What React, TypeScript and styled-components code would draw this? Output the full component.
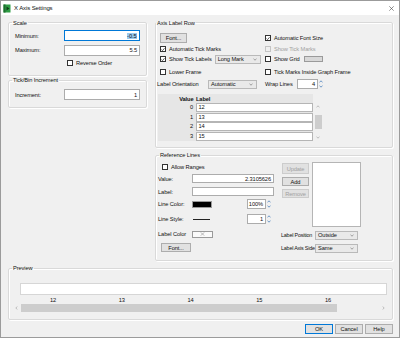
import React from 'react';
import styled, {createGlobalStyle} from 'styled-components';

const GlobalStyle = createGlobalStyle`
  html, body {
    margin: 0;
    padding: 0;
    background: #ffffff;
  }
  body {
    font-family: "Liberation Sans", Arial, sans-serif;
    font-size: 5.7px;
    letter-spacing: -0.1px;
    color: #111;
  }
  * {
    box-sizing: border-box;
  }
`;

const Window = styled.div`
  width: 400px;
  height: 338px;
  border: 1px solid #9b9b9b;
  background: #f0f0f0;
  display: flex;
  flex-direction: column;
  overflow: hidden;
`;

const TitleBar = styled.div`
  height: 14px;
  flex: none;
  background: #fff;
  display: flex;
  align-items: center;
  gap: 3px;
  padding: 0 5px 0 2px;
`;

const Title = styled.span`
  flex: 1;
  font-size: 6px;
`;

const Body = styled.div`
  flex: 1;
  padding: 3.5px 6px 0 7px;
  display: flex;
  flex-direction: column;
`;

const Top = styled.div`
  display: grid;
  grid-template-columns: 139px 238px;
  column-gap: 8px;
`;

const Column = styled.div<{$gap: number}>`
  display: flex;
  flex-direction: column;
  gap: ${p => p.$gap}px;
`;

const Group = styled.fieldset<{$h: number}>`
  margin: 0;
  padding: 0 4px;
  min-width: 0;
  height: ${p => p.$h}px;
  border: 1px solid #d9d9d9;
  border-radius: 2px;
  box-shadow: inset 1px 1px 0 #fff, 1px 1px 0 #fff;
`;

const Legend = styled.legend<{$shift?: number}>`
  padding: 0 1px;
  margin-left: ${p => p.$shift ?? -1}px;
  line-height: 8px;
`;

const FormRow = styled.div<{$h?: number; $mt?: number; $ml?: number}>`
  display: flex;
  align-items: center;
  height: ${p => p.$h ?? 11}px;
  margin-top: ${p => p.$mt ?? 0}px;
  margin-left: ${p => p.$ml ?? 0}px;
`;

const Label = styled.span<{$w?: number; $muted?: boolean; $tight?: boolean}>`
  flex: none;
  width: ${p => (p.$w ? `${p.$w}px` : 'auto')};
  color: ${p => (p.$muted ? '#a2a2a2' : 'inherit')};
  font-size: ${p => (p.$tight ? '5.4px' : 'inherit')};
  letter-spacing: ${p => (p.$tight ? '-0.2px' : 'inherit')};
  white-space: nowrap;
`;

const TextBox = styled.div<{$w: number; $h?: number; $focus?: boolean}>`
  flex: none;
  width: ${p => p.$w}px;
  height: ${p => p.$h ?? 11}px;
  background: #fff;
  border: 1px solid ${p => (p.$focus ? '#0078d7' : '#acacac')};
  display: flex;
  align-items: center;
  justify-content: flex-end;
  padding: 0 2px;
`;

const Selected = styled.span`
  background: #99c9ef;
  padding: 0 0.5px;
`;

const BoxMark = styled.span<{$disabled?: boolean}>`
  flex: none;
  width: 6px;
  height: 6px;
  border: 1px solid ${p => (p.$disabled ? '#c4c4c4' : '#333')};
  background: ${p => (p.$disabled ? '#f0f0f0' : '#fff')};
  display: flex;
  align-items: center;
  justify-content: center;
`;

const CheckLine = styled.div<{$mt?: number; $ml?: number}>`
  display: flex;
  align-items: center;
  gap: 3px;
  margin-top: ${p => p.$mt ?? 0}px;
  margin-left: ${p => p.$ml ?? 0}px;
`;

const Button = styled.div<{$w: number; $h?: number; $default?: boolean; $disabled?: boolean; $ml?: number}>`
  flex: none;
  width: ${p => p.$w}px;
  height: ${p => p.$h ?? 9}px;
  margin-left: ${p => p.$ml ?? 0}px;
  background: #e1e1e1;
  border: 1px solid ${p => (p.$default ? '#0078d7' : p.$disabled ? '#cccccc' : '#adadad')};
  color: ${p => (p.$disabled ? '#a0a0a0' : 'inherit')};
  display: flex;
  align-items: center;
  justify-content: center;
`;

const DropDown = styled.div<{$w: number; $ml?: number}>`
  flex: none;
  width: ${p => p.$w}px;
  height: 9px;
  margin-left: ${p => p.$ml ?? 0}px;
  background: #e9e9e9;
  border: 1px solid #b9b9b9;
  display: flex;
  align-items: center;
  justify-content: space-between;
  padding: 0 3px 0 2px;
`;

const Swatch = styled.div<{$w: number; $h: number; $color: string; $ml?: number}>`
  flex: none;
  width: ${p => p.$w}px;
  height: ${p => p.$h}px;
  margin-left: ${p => p.$ml ?? 0}px;
  background: ${p => p.$color};
  border: 1px solid #9a9a9a;
  display: flex;
  align-items: center;
  justify-content: center;
`;

const StyleLine = styled.span`
  flex: none;
  width: 17px;
  height: 1px;
  background: #222;
`;

const Spin = styled.div<{$ml?: number}>`
  flex: none;
  display: flex;
  align-items: stretch;
  margin-left: ${p => p.$ml ?? 0}px;
`;

const SpinArrows = styled.div`
  width: 6px;
  display: flex;
  flex-direction: column;
  align-items: center;
  justify-content: space-around;
`;

/* axis label row */

const AxisGrid = styled.div`
  display: grid;
  grid-template-columns: 105px 1fr;
  grid-template-rows: 12px 10px 10px 15px 10px;
  align-items: center;
  margin-top: 5.5px;
`;

const Cell = styled.div<{$ml?: number}>`
  display: flex;
  align-items: center;
  margin-left: ${p => p.$ml ?? 0}px;
`;

const Table = styled.div`
  display: flex;
  margin: 5px 0 0 -2px;
`;

const TableMain = styled.div`
  width: 155px;
`;

const HeadRow = styled.div`
  display: grid;
  grid-template-columns: 37px 1fr;
  height: 9px;
  align-items: center;
  background: #e6e6e6;
  font-weight: bold;
`;

const ValueHead = styled.span`
  text-align: right;
  padding-right: 1.5px;
`;

const LabelHead = styled.span`
  padding-left: 1px;
`;

const DataRow = styled.div`
  display: grid;
  grid-template-columns: 37px 1fr;
  height: 9.5px;
  background: #e6e6e6;
`;

const ValueCell = styled.span`
  text-align: right;
  padding-right: 2px;
  line-height: 9px;
`;

const LabelCell = styled.span`
  margin: 0 0 0.5px 1px;
  background: #fff;
  border: 1px solid #b5b5b5;
  padding-left: 1.5px;
  line-height: 7px;
`;

const VScroll = styled.div`
  width: 10px;
  height: 38px;
  margin-top: 9px;
  background: #f0f0f0;
  display: flex;
  flex-direction: column;
  align-items: center;
  justify-content: space-between;
  padding: 2px 0;
`;

const VThumb = styled.div`
  width: 7px;
  height: 14px;
  background: #cdcdcd;
`;

/* reference lines */

const RefBody = styled.div`
  display: flex;
  gap: 6px;
  margin-left: -2px;
`;

const RefForm = styled.div`
  width: 116px;
  display: flex;
  flex-direction: column;
`;

const RefSide = styled.div`
  display: flex;
  flex-direction: column;
  margin-top: 3px;
`;

const RefTop = styled.div`
  display: flex;
  gap: 3px;
  margin-left: 2px;
`;

const RefButtons = styled.div`
  display: flex;
  flex-direction: column;
  gap: 3px;
  padding-top: 1px;
`;

const ListBox = styled.div`
  width: 49px;
  height: 65px;
  background: #fff;
  border: 1px solid #b5b5b5;
`;

/* preview */

const Bar = styled.div`
  width: 367px;
  height: 12px;
  margin: 11px 0 0 7px;
  background: #fff;
  border: 1px solid #d6d6d6;
`;

const Ticks = styled.div`
  display: flex;
  margin-left: 5.6px;
  height: 8px;
  align-items: center;
  margin-top: 1px;
`;

const Tick = styled.span`
  width: 68.75px;
  text-align: center;
`;

const HScroll = styled.div`
  width: 374px;
  height: 8px;
  background: #f0f0f0;
  display: flex;
  align-items: center;
`;

const HArrow = styled.div`
  flex: none;
  width: 7.5px;
  display: flex;
  justify-content: center;
`;

const HThumb = styled.div`
  width: 316px;
  height: 8px;
  background: #cdcdcd;
`;

const HTrack = styled.div`
  flex: 1;
`;

const Footer = styled.div`
  display: flex;
  justify-content: flex-end;
  gap: 2px;
  margin-top: 4px;
`;

const Check = ({on, disabled}: {on?: boolean; disabled?: boolean}) => (
  <BoxMark $disabled={disabled}>
    {on && (
      <svg width="5" height="5" viewBox="0 0 5 5">
        <path d="M0.6 2.6 L1.9 3.9 L4.4 0.9" stroke="#222" strokeWidth="0.9" fill="none" />
      </svg>
    )}
  </BoxMark>
);

const CheckItem = ({text, on, disabled, mt, ml}: {text: string; on?: boolean; disabled?: boolean; mt?: number; ml?: number}) => (
  <CheckLine $mt={mt} $ml={ml}>
    <Check on={on} disabled={disabled} />
    <Label $muted={disabled}>{text}</Label>
  </CheckLine>
);

const Chevron = () => (
  <svg width="4" height="3" viewBox="0 0 4 3">
    <path d="M0.5 0.8 L2 2.2 L3.5 0.8" stroke="#666" strokeWidth="0.6" fill="none" />
  </svg>
);

const Select = ({text, w, ml}: {text: string; w: number; ml?: number}) => (
  <DropDown $w={w} $ml={ml}>
    <span>{text}</span>
    <Chevron />
  </DropDown>
);

const Spinner = ({value, w, h, ml}: {value: string; w: number; h: number; ml?: number}) => (
  <Spin $ml={ml}>
    <TextBox $w={w} $h={h}>{value}</TextBox>
    <SpinArrows>
      <svg width="4" height="3" viewBox="0 0 4 3">
        <path d="M0.5 2.4 L2 0.8 L3.5 2.4" stroke="#3a76b8" strokeWidth="0.7" fill="none" />
      </svg>
      <svg width="4" height="3" viewBox="0 0 4 3">
        <path d="M0.5 0.6 L2 2.2 L3.5 0.6" stroke="#3a76b8" strokeWidth="0.7" fill="none" />
      </svg>
    </SpinArrows>
  </Spin>
);

const AppIcon = () => (
  <svg width="8" height="9" viewBox="0 0 8 9">
    <rect x="0.5" y="0.5" width="7" height="8" fill="#2f9d45" />
    <rect x="0.5" y="0.5" width="2" height="8" fill="#1d6e2e" />
    <path d="M3.5 2.5 L6.5 4.5 L3.5 6.5 Z" fill="#0f3d18" />
  </svg>
);

const CloseIcon = () => (
  <svg width="5" height="5" viewBox="0 0 5 5">
    <path d="M0.3 0.3 L4.7 4.7 M4.7 0.3 L0.3 4.7" stroke="#444" strokeWidth="0.6" />
  </svg>
);

const tableRows = [
  {value: 0, label: '12'},
  {value: 1, label: '13'},
  {value: 2, label: '14'},
  {value: 3, label: '15'},
];

function App() {
  return (
    <>
      <GlobalStyle />
      <Window>
        <TitleBar>
          <AppIcon />
          <Title>X Axis Settings</Title>
          <CloseIcon />
        </TitleBar>
        <Body>
          <Top>
            <Column $gap={0.5}>
              <Group $h={57}>
                <Legend>Scale</Legend>
                <FormRow $mt={3.5} $ml={2}>
                  <Label $w={49}>Minimum:</Label>
                  <TextBox $w={76} $focus><Selected>-0.5</Selected></TextBox>
                </FormRow>
                <FormRow $mt={3.5} $ml={2}>
                  <Label $w={49}>Maximum:</Label>
                  <TextBox $w={76}>5.5</TextBox>
                </FormRow>
                <CheckItem text="Reverse Order" mt={4} ml={54} />
              </Group>
              <Group $h={31.5}>
                <Legend>Tick/Bin Increment</Legend>
                <FormRow $mt={5} $ml={2}>
                  <Label $w={49}>Increment:</Label>
                  <TextBox $w={76}>1</TextBox>
                </FormRow>
              </Group>
            </Column>
            <Column $gap={3.5}>
              <Group $h={129}>
                <Legend $shift={-4}>Axis Label Row</Legend>
                <AxisGrid>
                  <Cell>
                    <Button $w={27} $h={10}>Font...</Button>
                  </Cell>
                  <CheckItem text="Automatic Font Size" on />
                  <CheckItem text="Automatic Tick Marks" on />
                  <CheckItem text="Show Tick Marks" disabled />
                  <Cell>
                    <CheckItem text="Show Tick Labels" on />
                    <Select text="Long Mark" w={46} ml={3} />
                  </Cell>
                  <Cell>
                    <CheckItem text="Show Grid" />
                    <Swatch $w={19} $h={6} $color="#d8d8d8" $ml={4} />
                  </Cell>
                  <CheckItem text="Lower Frame" />
                  <CheckItem text="Tick Marks Inside Graph Frame" />
                  <Cell $ml={-3}>
                    <Label $w={51}>Label Orientation</Label>
                    <Select text="Automatic" w={49} />
                  </Cell>
                  <Cell>
                    <Label $w={32}>Wrap Lines</Label>
                    <Spinner value="4" w={21} h={10} />
                  </Cell>
                </AxisGrid>
                <Table>
                  <TableMain>
                    <HeadRow>
                      <ValueHead>Value</ValueHead>
                      <LabelHead>Label</LabelHead>
                    </HeadRow>
                    {tableRows.map(r => (
                      <DataRow key={r.value}>
                        <ValueCell>{r.value}</ValueCell>
                        <LabelCell>{r.label}</LabelCell>
                      </DataRow>
                    ))}
                  </TableMain>
                  <VScroll>
                    <svg width="4" height="3" viewBox="0 0 4 3">
                      <path d="M0.5 2.4 L2 0.8 L3.5 2.4" stroke="#9a9a9a" strokeWidth="0.6" fill="none" />
                    </svg>
                    <VThumb />
                    <svg width="4" height="3" viewBox="0 0 4 3">
                      <path d="M0.5 0.6 L2 2.2 L3.5 0.6" stroke="#9a9a9a" strokeWidth="0.6" fill="none" />
                    </svg>
                  </VScroll>
                </Table>
              </Group>
              <Group $h={110}>
                <Legend>Reference Lines</Legend>
                <RefBody>
                  <RefForm>
                    <CheckItem text="Allow Ranges" mt={5} ml={4} />
                    <FormRow $h={9} $mt={4}>
                      <Label $w={34}>Value:</Label>
                      <TextBox $w={82} $h={9}>2.3105626</TextBox>
                    </FormRow>
                    <FormRow $h={9} $mt={4}>
                      <Label $w={34}>Label:</Label>
                      <TextBox $w={82} $h={9} />
                    </FormRow>
                    <FormRow $h={10} $mt={3}>
                      <Label $w={34}>Line Color:</Label>
                      <Swatch $w={20} $h={7} $color="#000" />
                      <Spinner value="100%" w={19} h={10} ml={35} />
                    </FormRow>
                    <FormRow $h={10} $mt={5}>
                      <Label $w={35}>Line Style:</Label>
                      <StyleLine />
                      <Spinner value="1" w={19} h={10} ml={37} />
                    </FormRow>
                    <FormRow $h={10} $mt={5}>
                      <Label $w={34}>Label Color</Label>
                      <Swatch $w={21} $h={7} $color="#fafafa">
                        <svg width="5" height="4" viewBox="0 0 5 4">
                          <path d="M0.5 0.3 L4.5 3.7 M4.5 0.3 L0.5 3.7" stroke="#888" strokeWidth="0.5" />
                        </svg>
                      </Swatch>
                    </FormRow>
                    <FormRow $h={9} $mt={4}>
                      <Button $w={30} $ml={3}>Font...</Button>
                    </FormRow>
                  </RefForm>
                  <RefSide>
                    <RefTop>
                      <RefButtons>
                        <Button $w={27} $h={11} $disabled>Update</Button>
                        <Button $w={27}>Add</Button>
                        <Button $w={27} $disabled>Remove</Button>
                      </RefButtons>
                      <ListBox />
                    </RefTop>
                    <FormRow $h={10} $mt={3} $ml={1}>
                      <Label $w={34} $tight>Label Position</Label>
                      <Select text="Outside" w={43} />
                    </FormRow>
                    <FormRow $h={10} $mt={3} $ml={1}>
                      <Label $w={34} $tight>Label Axis Side</Label>
                      <Select text="Same" w={43} />
                    </FormRow>
                  </RefSide>
                </RefBody>
              </Group>
            </Column>
          </Top>
          <Group $h={56} style={{marginTop: 3}}>
            <Legend>Preview</Legend>
            <Bar />
            <Ticks>
              {[12, 13, 14, 15, 16].map(t => (
                <Tick key={t}>{t}</Tick>
              ))}
            </Ticks>
            <HScroll>
              <HArrow>
                <svg width="3" height="4" viewBox="0 0 3 4">
                  <path d="M2.4 0.5 L0.8 2 L2.4 3.5" stroke="#9a9a9a" strokeWidth="0.6" fill="none" />
                </svg>
              </HArrow>
              <HThumb />
              <HTrack />
              <HArrow>
                <svg width="3" height="4" viewBox="0 0 3 4">
                  <path d="M0.6 0.5 L2.2 2 L0.6 3.5" stroke="#9a9a9a" strokeWidth="0.6" fill="none" />
                </svg>
              </HArrow>
            </HScroll>
          </Group>
          <Footer>
            <Button $w={28} $h={10} $default>OK</Button>
            <Button $w={28} $h={10}>Cancel</Button>
            <Button $w={28} $h={10}>Help</Button>
          </Footer>
        </Body>
      </Window>
    </>
  );
}

export default App;
